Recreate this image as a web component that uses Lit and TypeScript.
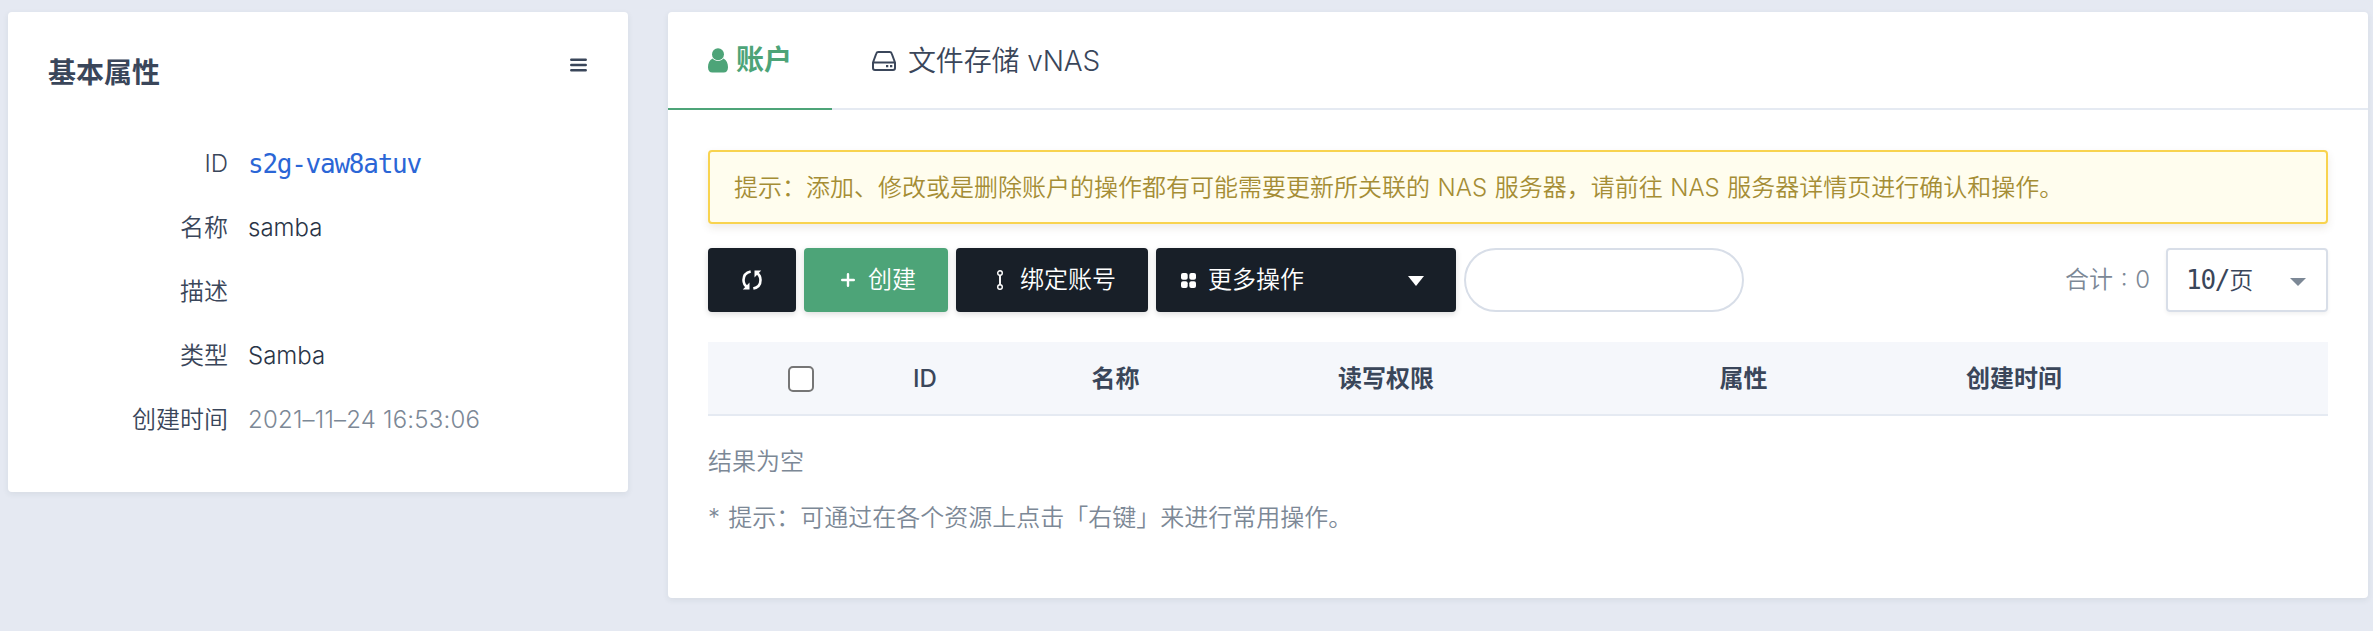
import { LitElement, html, css } from "lit";
import { customElement } from "lit/decorators.js";

const COLUMNS = [
  { label: "ID", width: 158 },
  { label: "名称", width: 223 },
  { label: "读写权限", width: 318 },
  { label: "属性", width: 397 },
  { label: "创建时间", width: 144 },
];

const menuIcon = html`<svg class="menu" width="17" height="14" viewBox="0 0 17 14" stroke="currentColor" stroke-width="2.5" stroke-linecap="round">
  <path d="M1.3 1.8h14.4M1.3 7h14.4M1.3 12.2h14.4" />
</svg>`;

const userIcon = html`<svg width="20" height="25" viewBox="0 0 20 25" fill="currentColor">
  <circle cx="10" cy="6.2" r="6" />
  <path d="M4.5 10.6C1.4 12 0 15.500 0 19.300 0 22.600 1.700 24.600 4.300 24.600h11.400c2.600 0 4.300-2 4.300-5.300 0-3.800-1.400-7.300-4.500-8.700C14 12.200 12.200 13.100 10 13.100S6 12.200 4.500 10.600Z" />
</svg>`;

const diskIcon = html`<svg width="24" height="20" viewBox="0 0 24 20" fill="none" stroke="currentColor" stroke-width="2" stroke-linejoin="round">
  <path d="M1 11.500 4.300 2.500Q4.800 1 6.300 1H17.700Q19.200 1 19.700 2.500L23 11.500V17Q23 19 21 19H3Q1 19 1 17ZM1 11.400H23" />
  <path d="M14 15.200h2.300M18 15.200h2.300" stroke-width="2.300" />
</svg>`;

const refreshIcon = html`<svg width="20" height="20" viewBox="0 0 20 20" fill="none" stroke="currentColor" stroke-width="2.600">
  <path d="M8.700 1.400C4.500 2.300 1.500 5.500 1.500 10c0 3 1.200 5.300 3.600 7.100M11.300 18.600c4.200-.9 7.200-4.100 7.200-8.600 0-3-1.200-5.300-3.600-7.100" />
  <path d="M7.500 12.500V19.400H.8ZM12.500 7.500V.6H19.200Z" fill="currentColor" stroke="none" />
</svg>`;

const plusIcon = html`<svg width="14" height="14" viewBox="0 0 14 14" stroke="currentColor" stroke-width="2.400" stroke-linecap="round">
  <path d="M7 1.200v11.600M1.200 7h11.600" />
</svg>`;

const linkIcon = html`<svg width="8" height="20" viewBox="0 0 8 20" fill="none" stroke="currentColor" stroke-width="1.400">
  <circle cx="4" cy="3" r="2.300" /><circle cx="4" cy="17" r="2.300" />
  <path d="M4 5.300v9.400" stroke-width="1.900" />
</svg>`;

const gridIcon = html`<svg width="15" height="15" viewBox="0 0 15 15" fill="currentColor">
  <rect width="6.700" height="6.700" rx="2" /><rect x="8.300" width="6.700" height="6.700" rx="2" />
  <rect y="8.300" width="6.700" height="6.700" rx="2" /><rect x="8.300" y="8.300" width="6.700" height="6.700" rx="2" />
</svg>`;

const caretIcon = html`<svg class="caret" width="16" height="10" viewBox="0 0 16 10" fill="currentColor"><path d="M0 0H16L8 10Z" /></svg>`;
const arrowIcon = html`<svg class="arrow" width="16" height="8" viewBox="0 0 16 8" fill="currentColor"><path d="M0 0H16L8 8Z" /></svg>`;

@customElement("app-root")
class AppRoot extends LitElement {
  static styles = css`
    :host {
      display: block;
      box-sizing: border-box;
      width: 100%;
      height: 631px;
      background: #e5e9f2;
      color: #3a465a;
      font: 350 24px/36px Inter, "Noto Sans CJK SC", sans-serif;
    }
    * { box-sizing: border-box; }
    svg { display: block; flex: none; }
    .page { display: flex; align-items: flex-start; gap: 40px; padding: 12px 5px 0 8px; }
    .card { background: #fff; border-radius: 4px; box-shadow: 0 2px 6px rgba(40, 60, 60, 0.08); }
    .info { width: 620px; height: 480px; padding: 0 40px; }
    .info-head { display: flex; justify-content: space-between; padding-top: 41px; height: 120px; }
    .title { font-size: 28px; line-height: 40px; font-weight: 600; margin: 0; }
    .menu { margin: 5px 1px 0 0; }
    .props { display: grid; grid-template-columns: 180px 1fr; column-gap: 20px; grid-auto-rows: 64px; align-items: center; margin: 0; }
    .key { text-align: right; }
    .val { margin: 0; color: #2a3547; }
    .val.mono { font-family: "DejaVu Sans Mono", "Noto Sans CJK SC", monospace; font-size: 26px; letter-spacing: -1.25px; color: #2b66d6; }
    .val.muted, .muted { color: #7c8896; }
    .date { letter-spacing: 0.2px; }
    .main { flex: 1; height: 586px; }
    .tabs { display: flex; height: 98px; border-bottom: 2px solid #e5eaf2; font-size: 28px; }
    .tab { display: flex; height: 98px; padding: 0 40px 2px; align-items: center; gap: 8px; }
    .tab.second { gap: 12px; letter-spacing: -0.15px; padding-bottom: 1px; }
    .tab.active { color: #4da478; border-bottom: 2px solid #4da478; padding-bottom: 0; font-weight: 600; width: 164px; }
    .body { padding: 40px 40px 0; }
    .alert { height: 74px; padding: 1px 24px 0; border: 2px solid #f8d34f; border-radius: 4px; background: #fffdee; color: #a58d35; line-height: 70px; box-shadow: 0 4px 8px rgba(80, 60, 20, 0.1); white-space: nowrap; word-spacing: 0.8px; }
    .bar { display: flex; gap: 8px; margin-top: 24px; height: 64px; }
    .btn { display: flex; align-items: center; height: 64px; border: 0; border-radius: 4px; background: #181f28; color: #fff; font: inherit; padding: 0; box-shadow: 0 2px 6px rgba(0, 0, 0, 0.14); white-space: nowrap; }
    .refresh { width: 88px; justify-content: center; }
    .create { width: 144px; padding-left: 37px; gap: 13px; background: #4da478; }
    .bind { width: 192px; padding-left: 40px; gap: 16px; }
    .more { width: 300px; padding: 0 32px 0 25px; gap: 12px; }
    .caret { margin: 2px 0 0 auto; }
    .search { width: 280px; height: 64px; border: 2px solid #d8dee8; border-radius: 32px; background: #fff; padding: 0 24px; outline: 0; }
    .total { margin-left: auto; line-height: 64px; padding-right: 8px; white-space: pre; word-spacing: 0.9px; }
    .select { display: flex; align-items: center; justify-content: space-between; width: 162px; height: 64px; border: 2px solid #d8dee8; border-radius: 4px; padding: 0 20px 0 18px; box-shadow: 0 2px 4px rgba(0, 0, 0, 0.06); }
    .label { font-family: "DejaVu Sans Mono", "Noto Sans CJK SC", monospace; }
    .label .num { font-size: 26px; letter-spacing: -1.25px; }
    .arrow { color: #7c8896; margin-top: 4px; }
    .thead { display: flex; align-items: center; margin-top: 30px; height: 74px; background: #f5f7fb; border-bottom: 2px solid #e5eaf2; padding: 1px 0 0 80px; font-weight: 600; }
    .check { width: 26px; height: 26px; border: 2px solid #767676; border-radius: 5px; background: #fff; margin-right: 32px; }
    .th { text-align: center; }
    .th:nth-of-type(2) { font-weight: 500; }
    .note { margin: 0; line-height: 36px; white-space: pre; }
    .empty { margin-top: 28px; }
    .hint { margin-top: 20px; word-spacing: 1.5px; }
  `;

  render() {
    return html`
      <div class="page">
        <section class="card info">
          <div class="info-head"><h2 class="title">基本属性</h2>${menuIcon}</div>
          <dl class="props">
            <dt class="key">ID</dt><dd class="val mono">s2g-vaw8atuv</dd>
            <dt class="key">名称</dt><dd class="val">samba</dd>
            <dt class="key">描述</dt><dd class="val"></dd>
            <dt class="key">类型</dt><dd class="val">Samba</dd>
            <dt class="key">创建时间</dt><dd class="val muted date">2021–11–24 16:53:06</dd>
          </dl>
        </section>
        <section class="card main">
          <nav class="tabs">
            <div class="tab active">${userIcon}<span>账户</span></div>
            <div class="tab second">${diskIcon}<span>文件存储 vNAS</span></div>
          </nav>
          <div class="body">
            <div class="alert">提示：添加、修改或是删除账户的操作都有可能需要更新所关联的 NAS 服务器，请前往 NAS 服务器详情页进行确认和操作。</div>
            <div class="bar">
              <button class="btn refresh">${refreshIcon}</button>
              <button class="btn create">${plusIcon}<span>创建</span></button>
              <button class="btn bind">${linkIcon}<span>绑定账号</span></button>
              <button class="btn more">${gridIcon}<span>更多操作</span>${caretIcon}</button>
              <input class="search" />
              <span class="total muted">合计 : 0</span>
              <div class="select"><span class="label"><span class="num">10/</span>页</span>${arrowIcon}</div>
            </div>
            <div class="thead"><span class="check"></span>${COLUMNS.map((c) => html`<span class="th" style="width:${c.width}px">${c.label}</span>`)}</div>
            <p class="note muted empty">结果为空</p>
            <p class="note muted hint">* 提示：可通过在各个资源上点击「右键」来进行常用操作。</p>
          </div>
        </section>
      </div>
    `;
  }
}
